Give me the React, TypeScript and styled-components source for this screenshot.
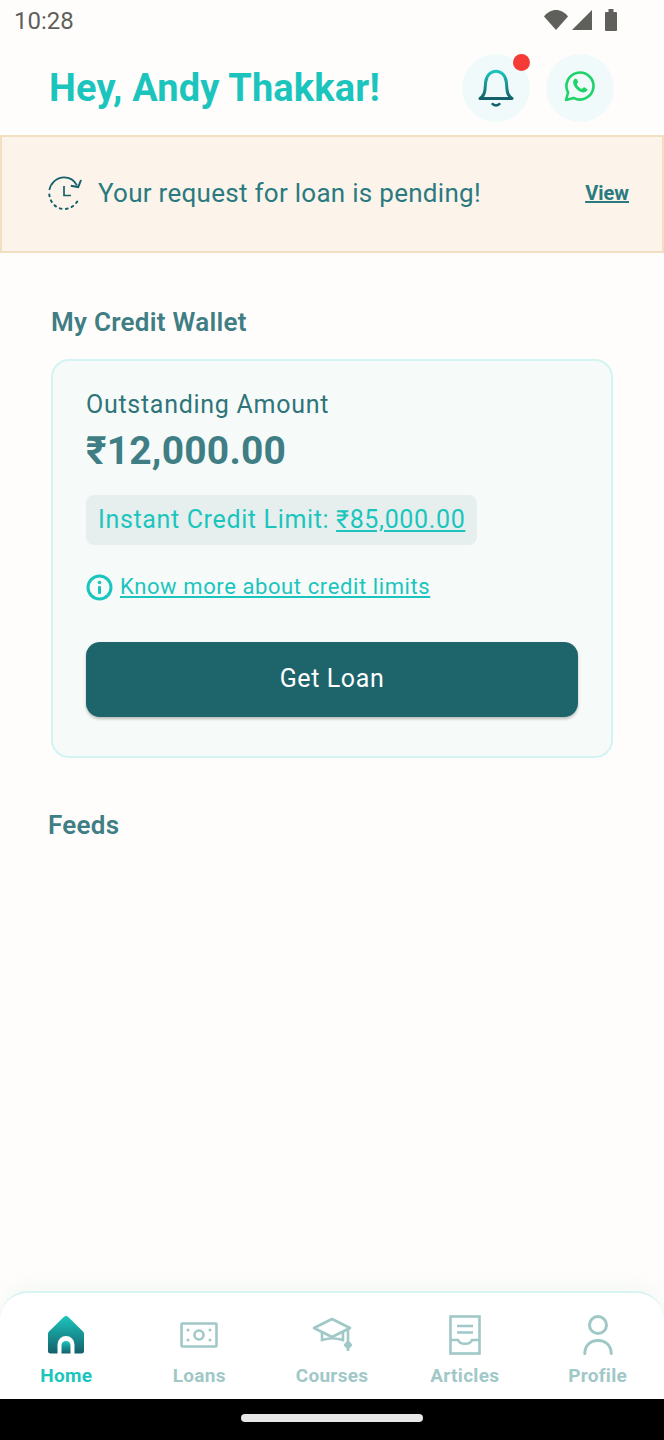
import styled, { createGlobalStyle } from "styled-components";

const GlobalStyle = createGlobalStyle`
  html, body {
    margin: 0;
    padding: 0;
    background: #fffdfb;
    font-family: Roboto, "Noto Sans", sans-serif;
  }
`;

const Page = styled.div`
  width: 664px;
  height: 1440px;
  display: flex;
  flex-direction: column;
  overflow: hidden;
  background: #fffdfb;
`;

const StatusBar = styled.div`
  height: 42px;
  flex: none;
  display: flex;
  align-items: center;
  justify-content: space-between;
  padding: 0 46px 0 14px;
  color: #5f5f5c;
  font-size: 24px;
  line-height: 42px;
`;

const StatusIcons = styled.div`
  display: flex;
  align-items: center;
  gap: 4px;
  margin-bottom: 2px;
`;

const BatteryIcon = styled.svg`
  margin-left: 8px;
`;

const Header = styled.header`
  height: 93px;
  flex: none;
  display: flex;
  align-items: center;
  justify-content: space-between;
  padding: 0 50px 2px 49px;
  box-sizing: border-box;
`;

const Title = styled.h1`
  margin: 0;
  color: #1bc5bd;
  font-size: 38px;
  font-weight: 700;
  line-height: 44px;
  letter-spacing: 0.17px;
`;

const HeaderActions = styled.div`
  display: flex;
  gap: 16px;
`;

const RoundButton = styled.div`
  position: relative;
  width: 68px;
  height: 68px;
  border-radius: 50%;
  background: #f1fafa;
  display: flex;
  align-items: center;
  justify-content: center;
`;

const WhatsAppWrap = styled.span`
  display: flex;
  margin-bottom: 4px;
`;

const Dot = styled.span`
  position: absolute;
  top: 0;
  right: 0;
  width: 17px;
  height: 17px;
  border-radius: 50%;
  background: #f43b36;
`;

const Banner = styled.div`
  height: 118px;
  flex: none;
  box-sizing: border-box;
  border: 2px solid #f1dfc1;
  background: #fcf4eb;
  display: flex;
  align-items: center;
  padding: 0 33px 2px 45px;
`;

const BannerText = styled.span`
  flex: 1;
  margin-left: 15px;
  color: #2a7a80;
  font-size: 26px;
  letter-spacing: 0.28px;
`;

const ViewLink = styled.a`
  color: #2a7a80;
  font-size: 20px;
  font-weight: 700;
  text-decoration: underline;
`;

const Content = styled.main`
  flex: 1;
  display: flex;
  flex-direction: column;
  padding: 52px 51px 0;
`;

const SectionTitle = styled.h2<{ $shift?: number }>`
  margin: 0 0 0 ${(p) => p.$shift ?? 0}px;
  color: #3f7e84;
  font-size: 26px;
  font-weight: 600;
  line-height: 34px;
  letter-spacing: 0.27px;
`;

const Card = styled.section`
  margin-top: 20px;
  height: 399px;
  box-sizing: border-box;
  border: 2px solid #d3f4f1;
  border-radius: 18px;
  background: #f6fbfa;
  padding: 27px 33px 0;
  display: flex;
  flex-direction: column;
  align-items: flex-start;
  margin-bottom: 50px;
`;

const CardLabel = styled.div`
  color: #2f7479;
  font-size: 25px;
  line-height: 34px;
  letter-spacing: 0.72px;
`;

const Amount = styled.div`
  margin-top: 3px;
  color: #3f7e84;
  font-size: 39px;
  font-weight: 700;
  line-height: 52px;
  letter-spacing: 0.2px;
`;

const LimitBadge = styled.div`
  margin-top: 18px;
  height: 50px;
  box-sizing: border-box;
  padding: 0 12px;
  border-radius: 8px;
  background: #e6efee;
  color: #1bc5bd;
  font-size: 25px;
  line-height: 50px;
  letter-spacing: 0.65px;
`;

const Underlined = styled.span`
  text-decoration: underline;
`;

const InfoRow = styled.div`
  margin-top: 26px;
  display: flex;
  align-items: center;
  gap: 7px;
  color: #1bc5bd;
  font-size: 22px;
  line-height: 32px;
  letter-spacing: 0.6px;
`;

const LoanButton = styled.button`
  margin-top: 39px;
  width: 100%;
  height: 75px;
  flex: none;
  border: none;
  border-radius: 14px;
  background: #1e646b;
  color: #ffffff;
  font-family: inherit;
  font-size: 25px;
  font-weight: 400;
  letter-spacing: 0.6px;
  padding: 0 0 2px;
  box-shadow: 0 2px 3px rgba(0, 0, 0, 0.25);
`;

const BottomNav = styled.nav`
  height: 108px;
  flex: none;
  box-sizing: border-box;
  display: grid;
  grid-template-columns: repeat(5, 1fr);
  background: #ffffff;
  border-top: 2px solid #d9f3f1;
  border-radius: 28px 28px 0 0;
  box-shadow: 0 -8px 16px rgba(200, 235, 230, 0.18);
`;

const NavItem = styled.div<{ $active?: boolean }>`
  display: flex;
  flex-direction: column;
  align-items: center;
  padding-top: 21px;
  color: ${(p) => (p.$active ? "#1bc5bd" : "#a0c8c7")};
  font-size: 19px;
  font-weight: 700;
  letter-spacing: 0.3px;
`;

const NavIcon = styled.div`
  height: 42px;
  display: flex;
  align-items: center;
  justify-content: center;
`;

const NavLabel = styled.span`
  margin-top: 8px;
  line-height: 24px;
`;

const SystemBar = styled.div`
  height: 41px;
  flex: none;
  background: #000000;
  display: flex;
  justify-content: center;
  padding-top: 15px;
  box-sizing: border-box;
`;

const HomeIndicator = styled.div`
  width: 182px;
  height: 8px;
  border-radius: 4px;
  background: #e8e8e8;
`;

const navStroke = "#a0c8c7";

const BellIcon = () => (
  <svg width="36" height="38" viewBox="0 0 36 38" fill="none">
    <defs>
      <linearGradient id="bell" x1="0" y1="0" x2="0" y2="1">
        <stop offset="0" stopColor="#1bc5bd" />
        <stop offset="1" stopColor="#14606a" />
      </linearGradient>
    </defs>
    <path
      d="M2 29.500c3-2 4.600-4.600 5-9l.6-7C8.200 6.600 12.500 2.200 18 2.200s9.800 4.400 10.400 11.300l.6 7c.4 4.400 2 7 5 9z"
      stroke="url(#bell)"
      strokeWidth="3"
      strokeLinejoin="round"
    />
    <path d="M14.500 35c2 1.600 5 1.600 7 0" stroke="#14606a" strokeWidth="2.400" strokeLinecap="round" />
  </svg>
);

const WhatsAppIcon = () => (
  <svg width="32" height="32" viewBox="0 0 32 32" fill="none">
    <path
      d="M2 30l2.100-7.500A13.500 13.500 0 1 1 9.500 27.900z"
      stroke="#1fd36a"
      strokeWidth="2.600"
      strokeLinejoin="round"
    />
    <path
      d="M11.800 8.400c-.8 0-2.700 1.400-2.700 3.800 0 4.300 5.900 10.300 10.500 10.300 2.500 0 3.900-1.900 3.900-2.900 0-.6-3.100-2.300-3.600-2.300-.6 0-1.400 1.500-2 1.500-1.700 0-5-3.300-5-4.800 0-.7 1.300-1.300 1.300-2 0-.5-1.500-3.600-2.400-3.600z"
      fill="#1fd36a"
    />
  </svg>
);

const PendingIcon = () => (
  <svg width="36" height="36" viewBox="0 0 36 36" fill="none" stroke="#14606a">
    <path d="M2.300 15C3.700 8 9.600 2.300 17 2.300c5.500 0 10.400 3 13 8" strokeWidth="1.700" />
    <path d="M34 5l-2.800 7-7.400-1.300" strokeWidth="2" />
    <path d="M17 11v9.500h7" strokeWidth="1.700" />
    <path
      d="M2.300 19.500C3 27.800 9.500 34 17 34c6.500 0 12-4 14.500-10"
      strokeWidth="2"
      strokeDasharray="1.800 4.300"
      strokeLinecap="round"
    />
  </svg>
);

const InfoIcon = () => (
  <svg width="27" height="27" viewBox="0 0 27 27" fill="none">
    <circle cx="13.500" cy="13.500" r="11.500" stroke="#1bc5bd" strokeWidth="3" />
    <circle cx="13.500" cy="8.500" r="1.800" fill="#1bc5bd" />
    <rect x="12" y="12" width="3" height="8" rx="1" fill="#1bc5bd" />
  </svg>
);

const HomeIcon = () => (
  <svg width="38" height="38" viewBox="0 0 38 38">
    <defs>
      <linearGradient id="home" x1="0" y1="0" x2="0" y2="1">
        <stop offset="0" stopColor="#1bc5bd" />
        <stop offset="1" stopColor="#14606a" />
      </linearGradient>
    </defs>
    <path
      fill="url(#home)"
      d="M16.500 1.200a3.500 3.500 0 0 1 5 0L36 15.500a3 3 0 0 1 1 2.200V35a2.500 2.500 0 0 1-2.500 2.500h-7V28.500a8.500 8.500 0 0 0-17 0V37.500h-7A2.500 2.500 0 0 1 1 35V17.700a3 3 0 0 1 1-2.200z"
    />
    <path fill="url(#home)" d="M14.500 37.500v-8a4.500 4.500 0 0 1 9 0v8z" />
  </svg>
);

const LoansIcon = () => (
  <svg width="38" height="26" viewBox="0 0 38 26" fill="none" stroke={navStroke}>
    <rect x="1.500" y="1.500" width="35" height="23" rx="1" strokeWidth="2.600" />
    <circle cx="19" cy="13" r="4.500" strokeWidth="2.600" />
    <path d="M8 8v.1M8 18v.1M30 8v.1M30 18v.1" strokeWidth="3" strokeLinecap="round" />
  </svg>
);

const CoursesIcon = () => (
  <svg width="40" height="38" viewBox="0 0 40 38" fill="none" stroke={navStroke} strokeWidth="2.600">
    <path d="M2 12L20 3l18 9-18 9z" strokeLinejoin="round" />
    <path d="M10 16v8c6-2 15-2 21 0v-8" />
    <path d="M36 12v14" />
    <path d="M36 26l2.800 3-2.800 3-2.800-3z" fill={navStroke} strokeLinejoin="round" />
    <path d="M36 32v3" />
  </svg>
);

const ArticlesIcon = () => (
  <svg width="32" height="40" viewBox="0 0 32 40" fill="none" stroke={navStroke} strokeWidth="2.600">
    <rect x="1.500" y="1.500" width="29" height="37" />
    <path d="M8 11h16M8 17.500h16" />
    <path d="M1.500 25H9c1.500 5 12.500 5 14 0h7.500" />
  </svg>
);

const ProfileIcon = () => (
  <svg width="30" height="40" viewBox="0 0 30 40" fill="none" stroke={navStroke} strokeWidth="3">
    <circle cx="15" cy="10" r="8.500" />
    <path d="M1.800 38.500c0-8 5.500-13 13.200-13s13.200 5 13.200 13" strokeLinecap="round" />
  </svg>
);

const navItems = [
  { label: "Home", icon: <HomeIcon />, active: true },
  { label: "Loans", icon: <LoansIcon /> },
  { label: "Courses", icon: <CoursesIcon /> },
  { label: "Articles", icon: <ArticlesIcon /> },
  { label: "Profile", icon: <ProfileIcon /> },
];

const App = () => {
  return (
    <Page>
      <GlobalStyle />
      <StatusBar>
        <span>10:28</span>
        <StatusIcons>
          <svg width="24" height="20" viewBox="0 0 24 20">
            <path d="M0 6.500C3 2.500 7.500 0 12 0s9 2.500 12 6.500L12 20z" fill="#5f5f5c" />
          </svg>
          <svg width="20" height="20" viewBox="0 0 20 20">
            <path d="M20 0v20H0z" fill="#5f5f5c" />
          </svg>
          <BatteryIcon width="14" height="22" viewBox="0 0 14 22">
            <path d="M2 3h2.500V0h5v3H12a1 1 0 0 1 1 1v17a1 1 0 0 1-1 1H2a1 1 0 0 1-1-1V4a1 1 0 0 1 1-1z" fill="#5f5f5c" />
          </BatteryIcon>
        </StatusIcons>
      </StatusBar>
      <Header>
        <Title>Hey, Andy Thakkar!</Title>
        <HeaderActions>
          <RoundButton>
            <BellIcon />
            <Dot />
          </RoundButton>
          <RoundButton>
            <WhatsAppWrap>
              <WhatsAppIcon />
            </WhatsAppWrap>
          </RoundButton>
        </HeaderActions>
      </Header>
      <Banner>
        <PendingIcon />
        <BannerText>Your request for loan is pending!</BannerText>
        <ViewLink>View</ViewLink>
      </Banner>
      <Content>
        <SectionTitle>My Credit Wallet</SectionTitle>
        <Card>
          <CardLabel>Outstanding Amount</CardLabel>
          <Amount>₹12,000.00</Amount>
          <LimitBadge>
            Instant Credit Limit: <Underlined>₹85,000.00</Underlined>
          </LimitBadge>
          <InfoRow>
            <InfoIcon />
            <Underlined>Know more about credit limits</Underlined>
          </InfoRow>
          <LoanButton>Get Loan</LoanButton>
        </Card>
        <SectionTitle $shift={-3}>Feeds</SectionTitle>
      </Content>
      <BottomNav>
        {navItems.map((item) => (
          <NavItem key={item.label} $active={item.active}>
            <NavIcon>{item.icon}</NavIcon>
            <NavLabel>{item.label}</NavLabel>
          </NavItem>
        ))}
      </BottomNav>
      <SystemBar>
        <HomeIndicator />
      </SystemBar>
    </Page>
  );
};

export default App;
